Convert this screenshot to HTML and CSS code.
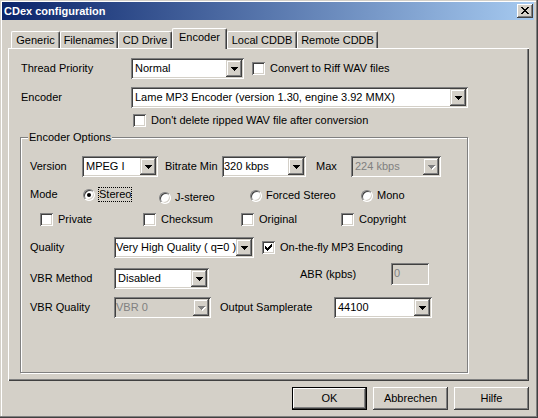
FILE: index.html
```html
<!DOCTYPE html>
<html lang="de">
<head>
<meta charset="utf-8">
<title>CDex configuration</title>
<link rel="stylesheet" href="styles.css">
</head>
<body>
<div class="window">
  <div class="titlebar">
    <span class="title">CDex configuration</span>
    <span class="closebtn"><svg class="xglyph" width="8" height="7" viewBox="0 0 8 7" shape-rendering="crispEdges"><path d="M0 0h2v1H0zM6 0h2v1H6zM1 1h2v1H1zM5 1h2v1H5zM2 2h4v1H2zM3 3h2v1H3zM2 4h4v1H2zM1 5h2v1H1zM5 5h2v1H5zM0 6h2v1H0zM6 6h2v1H6z"/></svg></span>
  </div>

  <div class="tabstrip">
    <div class="tab tab-generic">Generic</div>
    <div class="tab tab-filenames">Filenames</div>
    <div class="tab tab-cddrive">CD Drive</div>
    <div class="tab tab-encoder active">Encoder</div>
    <div class="tab tab-local">Local CDDB</div>
    <div class="tab tab-remote">Remote CDDB</div>
  </div>

  <div class="panel">
    <div class="row row-priority">
      <span class="lbl lbl-main">Thread Priority</span>
      <div class="combo cb-priority"><span class="ctext">Normal</span><span class="dbtn"><svg class="arrow" width="7" height="4" viewBox="0 0 7 4" shape-rendering="crispEdges"><path d="M0 0h7v1H0zM1 1h5v1H1zM2 2h3v1H2zM3 3h1v1H3z"/></svg></span></div>
      <div class="check ck-riff"><span class="box"></span><span class="ctxt">Convert to Riff WAV files</span></div>
    </div>

    <div class="row row-encoder">
      <span class="lbl lbl-main">Encoder</span>
      <div class="combo cb-encoder"><span class="ctext">Lame MP3 Encoder (version 1.30, engine 3.92 MMX)</span><span class="dbtn"><svg class="arrow" width="7" height="4" viewBox="0 0 7 4" shape-rendering="crispEdges"><path d="M0 0h7v1H0zM1 1h5v1H1zM2 2h3v1H2zM3 3h1v1H3z"/></svg></span></div>
    </div>

    <div class="row row-keep">
      <div class="check ck-keep"><span class="box"></span><span class="ctxt">Don't delete ripped WAV file after conversion</span></div>
    </div>

    <div class="group">
      <div class="legend">Encoder Options</div>

      <div class="grow row-version">
        <span class="lbl gl-version">Version</span>
        <div class="combo cb-version"><span class="ctext">MPEG I</span><span class="dbtn"><svg class="arrow" width="7" height="4" viewBox="0 0 7 4" shape-rendering="crispEdges"><path d="M0 0h7v1H0zM1 1h5v1H1zM2 2h3v1H2zM3 3h1v1H3z"/></svg></span></div>
        <span class="lbl gl-bitrate">Bitrate Min</span>
        <div class="combo tight cb-min"><span class="ctext">320 kbps</span><span class="dbtn"><svg class="arrow" width="7" height="4" viewBox="0 0 7 4" shape-rendering="crispEdges"><path d="M0 0h7v1H0zM1 1h5v1H1zM2 2h3v1H2zM3 3h1v1H3z"/></svg></span></div>
        <span class="lbl gl-max">Max</span>
        <div class="combo disabled cb-max"><span class="ctext">224 kbps</span><span class="dbtn"><svg class="arrow" width="8" height="5" viewBox="0 0 8 5" shape-rendering="crispEdges"><path class="hl" d="M1 1h7v1H1zM2 2h5v1H2zM3 3h3v1H3zM4 4h1v1H4z"/><path class="sh" d="M0 0h7v1H0zM1 1h5v1H1zM2 2h3v1H2zM3 3h1v1H3z"/></svg></span></div>
      </div>

      <div class="grow row-mode">
        <span class="lbl gl-mode">Mode</span>
        <div class="ritem ri-stereo"><span class="radio on"></span><span class="rtxt focus">Stereo</span></div>
        <div class="ritem ri-joint"><span class="radio"></span><span class="rtxt">J-stereo</span></div>
        <div class="ritem ri-forced"><span class="radio"></span><span class="rtxt">Forced Stereo</span></div>
        <div class="ritem ri-mono"><span class="radio"></span><span class="rtxt">Mono</span></div>
      </div>

      <div class="grow row-flags">
        <div class="check fl-private"><span class="box"></span><span class="ctxt">Private</span></div>
        <div class="check fl-checksum"><span class="box"></span><span class="ctxt">Checksum</span></div>
        <div class="check fl-original"><span class="box"></span><span class="ctxt">Original</span></div>
        <div class="check"><span class="box"></span><span class="ctxt">Copyright</span></div>
      </div>

      <div class="grow row-quality">
        <span class="lbl gl-wide">Quality</span>
        <div class="combo tight cb-quality"><span class="ctext">Very High Quality ( q=0 )</span><span class="dbtn"><svg class="arrow" width="7" height="4" viewBox="0 0 7 4" shape-rendering="crispEdges"><path d="M0 0h7v1H0zM1 1h5v1H1zM2 2h3v1H2zM3 3h1v1H3z"/></svg></span></div>
        <div class="check ck-otf"><span class="box"><svg class="tick" width="7" height="7" viewBox="0 0 7 7" shape-rendering="crispEdges"><path d="M0 2h1v3H0zM1 3h1v3H1zM2 4h1v3H2zM3 3h1v3H3zM4 2h1v3H4zM5 1h1v3H5zM6 0h1v3H6z"/></svg></span><span class="ctxt">On-the-fly MP3 Encoding</span></div>
      </div>

      <div class="grow row-abr">
        <div class="sub-vbr">
          <span class="lbl gl-wide">VBR Method</span>
          <div class="combo cb-vbrm"><span class="ctext">Disabled</span><span class="dbtn"><svg class="arrow" width="7" height="4" viewBox="0 0 7 4" shape-rendering="crispEdges"><path d="M0 0h7v1H0zM1 1h5v1H1zM2 2h3v1H2zM3 3h1v1H3z"/></svg></span></div>
        </div>
        <span class="lbl gl-abr">ABR (kpbs)</span>
        <div class="edit disabled">0</div>
      </div>

      <div class="grow row-vbrq">
        <span class="lbl gl-wide">VBR Quality</span>
        <div class="combo tight disabled cb-vbrq"><span class="ctext">VBR 0</span><span class="dbtn"><svg class="arrow" width="8" height="5" viewBox="0 0 8 5" shape-rendering="crispEdges"><path class="hl" d="M1 1h7v1H1zM2 2h5v1H2zM3 3h3v1H3zM4 4h1v1H4z"/><path class="sh" d="M0 0h7v1H0zM1 1h5v1H1zM2 2h3v1H2zM3 3h1v1H3z"/></svg></span></div>
        <span class="lbl gl-out">Output Samplerate</span>
        <div class="combo cb-rate"><span class="ctext">44100</span><span class="dbtn"><svg class="arrow" width="7" height="4" viewBox="0 0 7 4" shape-rendering="crispEdges"><path d="M0 0h7v1H0zM1 1h5v1H1zM2 2h3v1H2zM3 3h1v1H3z"/></svg></span></div>
      </div>
    </div>
  </div>

  <div class="buttons">
    <div class="btn default">OK</div>
    <div class="btn">Abbrechen</div>
    <div class="btn">Hilfe</div>
  </div>
</div>
</body>
</html>
```

FILE: styles.css
```css
* { box-sizing: border-box; }

html, body {
  margin: 0;
  padding: 0;
}

body {
  background: #D4D0C8;
  font-family: "Liberation Sans", Arial, sans-serif;
  font-size: 11px;
  line-height: 13px;
  color: #000;
}

/* ---------- window frame ---------- */
.window {
  width: 538px;
  height: 418px;
  overflow: hidden;
  background: #D4D0C8;
  padding-top: 2px;
  box-shadow:
    inset -1px -1px 0 #404040,
    inset -2px -2px 0 #808080,
    inset 1px 1px 0 #D4D0C8,
    inset 2px 2px 0 #fff;
}

.titlebar {
  display: flex;
  align-items: center;
  justify-content: space-between;
  height: 18px;
  margin: 0 4px 0 2px;
  padding: 0 1px 0 2px;
  background: linear-gradient(to right, #0A246A, #A6CAF0);
}

.title {
  color: #fff;
  font-weight: bold;
  font-size: 11px;
  white-space: nowrap;
}

.closebtn {
  display: flex;
  width: 16px;
  height: 14px;
  padding: 3px 0 0 4px;
  background: #D4D0C8;
  box-shadow:
    inset -1px -1px 0 #404040,
    inset 1px 1px 0 #fff,
    inset -2px -2px 0 #808080,
    inset 2px 2px 0 #D4D0C8;
}

.xglyph { display: block; fill: #000; }

/* ---------- tabs ---------- */
.tabstrip {
  display: flex;
  align-items: flex-end;
  height: 28px;
  padding-left: 11px;
}

.tab {
  height: 17px;
  display: flex;
  align-items: center;
  justify-content: center;
  white-space: nowrap;
  border-top: 1px solid #fff;
  border-left: 1px solid #fff;
  border-right: 1px solid #404040;
  border-radius: 2px 2px 0 0;
  box-shadow: inset -1px 0 0 #808080;
  background: #D4D0C8;
}

.tab.active {
  height: 21px;
  padding-bottom: 3px;
  margin-bottom: -1px;
  position: relative;
  z-index: 1;
}

.tab-generic { width: 49px; }
.tab-filenames { width: 58px; }
.tab-cddrive { width: 54px; }
.tab-encoder { width: 55px; }
.tab-local { width: 70px; }
.tab-remote { width: 81px; }

/* ---------- tab body ---------- */
.panel {
  margin-left: 8px;
  width: 521px;
  height: 333px;
  padding-top: 10px;
  box-shadow:
    inset 1px 1px 0 #fff,
    inset -1px -1px 0 #404040,
    inset -2px -2px 0 #808080;
}

.row {
  display: flex;
  align-items: center;
  padding-left: 13px;
  height: 21px;
}

.row-encoder { margin-top: 8px; }
.row-keep { margin-top: 6px; height: 13px; }

.lbl { white-space: nowrap; flex: none; }
.lbl-main { width: 110px; }

/* ---------- combo box ---------- */
.combo {
  display: flex;
  flex: none;
  height: 21px;
  padding: 2px;
  background: #fff;
  box-shadow:
    inset 1px 1px 0 #808080,
    inset -1px -1px 0 #fff,
    inset 2px 2px 0 #404040,
    inset -2px -2px 0 #D4D0C8;
}

.combo .ctext {
  flex: 1;
  min-width: 0;
  padding-left: 2px;
  line-height: 17px;
  white-space: nowrap;
  overflow: hidden;
}

.combo.tight .ctext { padding-left: 0; }

.combo.disabled {
  background: #D4D0C8;
  color: #808080;
}

.dbtn {
  flex: none;
  width: 16px;
  height: 17px;
  padding: 7px 0 0 5px;
  background: #D4D0C8;
  box-shadow:
    inset -1px -1px 0 #404040,
    inset 1px 1px 0 #D4D0C8,
    inset -2px -2px 0 #808080,
    inset 2px 2px 0 #fff;
}

.arrow { display: block; fill: #000; }
.arrow .hl { fill: #fff; }
.arrow .sh { fill: #808080; }

.cb-priority { width: 113px; }
.cb-encoder { width: 337px; }

/* ---------- checkbox ---------- */
.check {
  display: flex;
  align-items: center;
  flex: none;
  white-space: nowrap;
}

.box {
  flex: none;
  width: 13px;
  height: 13px;
  padding: 3px 0 0 3px;
  background: #fff;
  box-shadow:
    inset 1px 1px 0 #808080,
    inset -1px -1px 0 #fff,
    inset 2px 2px 0 #404040,
    inset -2px -2px 0 #D4D0C8;
}

.tick { display: block; fill: #000; }

.ctxt { margin-left: 5px; }

.ck-riff { margin-left: 8px; }
.ck-keep { margin-left: 112px; }

/* ---------- group box ---------- */
.group {
  margin: 10px 0 0 12px;
  width: 448px;
  height: 236px;
  border: 1px solid #808080;
  box-shadow:
    inset 1px 1px 0 #fff,
    1px 1px 0 #fff;
}

.legend {
  width: fit-content;
  margin: -7px 0 0 7px;
  padding: 0 1px;
  background: #D4D0C8;
  white-space: nowrap;
}

.grow {
  display: flex;
  align-items: center;
  padding-left: 9px;
  height: 21px;
}

.row-version { margin-top: 12px; }
.gl-version { width: 52px; }
.cb-version { width: 76px; }
.gl-bitrate { width: 57px; margin-left: 7px; }
.cb-min { width: 84px; }
.gl-max { width: 35px; margin-left: 10px; }
.cb-max { width: 90px; }

/* mode / radio buttons */
.row-mode {
  margin-top: 10px;
  height: 15px;
  align-items: flex-start;
}

.gl-mode { width: 53px; margin-top: 1px; }

.ritem {
  display: flex;
  align-items: flex-start;
  flex: none;
  margin-top: 1px;
  white-space: nowrap;
}

.radio {
  flex: none;
  position: relative;
  width: 12px;
  height: 12px;
  margin-top: 1px;
  border-radius: 50%;
  background: #fff;
  border: 1px solid;
  border-color: #808080 #fff #fff #808080;
  box-shadow:
    inset 1px 1px 0 #404040,
    inset -1px -1px 0 #D4D0C8;
}

.radio.on::after {
  content: "";
  position: absolute;
  left: 3px;
  top: 3px;
  width: 4px;
  height: 4px;
  border-radius: 50%;
  background: #000;
}

.rtxt { margin-left: 4px; }

.rtxt.focus {
  margin-left: 3px;
  margin-top: -1px;
  border: 1px dotted #000;
}

.ri-stereo { width: 76px; }
.ri-joint { width: 91px; margin-top: 4px; }
.ri-forced { width: 111px; margin-top: 2px; }
.ri-mono { margin-top: 2px; }

/* flags */
.row-flags {
  margin-top: 11px;
  height: 13px;
  padding-left: 19px;
}

.fl-private { width: 103px; }
.fl-checksum { width: 98px; }
.fl-original { width: 100px; }

/* quality */
.row-quality { margin-top: 11px; }
.gl-wide { width: 84px; }
.cb-quality { width: 140px; }
.ck-otf { margin-left: 8px; }

/* ABR / VBR method */
.row-abr {
  margin-top: 5px;
  height: 26px;
  align-items: flex-start;
}

.sub-vbr {
  display: flex;
  align-items: center;
  margin-top: 5px;
}

.cb-vbrm { width: 95px; }

.gl-abr {
  width: 91px;
  margin-left: 91px;
  line-height: 22px;
}

.edit {
  flex: none;
  width: 38px;
  height: 22px;
  padding: 2px 0 0 3px;
  line-height: 17px;
  background: #fff;
  box-shadow:
    inset 1px 1px 0 #808080,
    inset -1px -1px 0 #fff,
    inset 2px 2px 0 #404040,
    inset -2px -2px 0 #D4D0C8;
}

.edit.disabled {
  background: #D4D0C8;
  color: #808080;
}

/* VBR quality / samplerate */
.row-vbrq { margin-top: 8px; }
.cb-vbrq { width: 97px; }
.gl-out { width: 114px; margin-left: 9px; }
.cb-rate { width: 98px; }

/* ---------- dialog buttons ---------- */
.buttons {
  display: flex;
  gap: 6px;
  margin: 6px 0 0 292px;
}

.btn {
  width: 75px;
  height: 23px;
  display: flex;
  align-items: center;
  justify-content: center;
  background: #D4D0C8;
  box-shadow:
    inset -1px -1px 0 #404040,
    inset 1px 1px 0 #fff,
    inset -2px -2px 0 #808080,
    inset 2px 2px 0 #D4D0C8;
}

.btn.default {
  border: 1px solid #000;
}
```
